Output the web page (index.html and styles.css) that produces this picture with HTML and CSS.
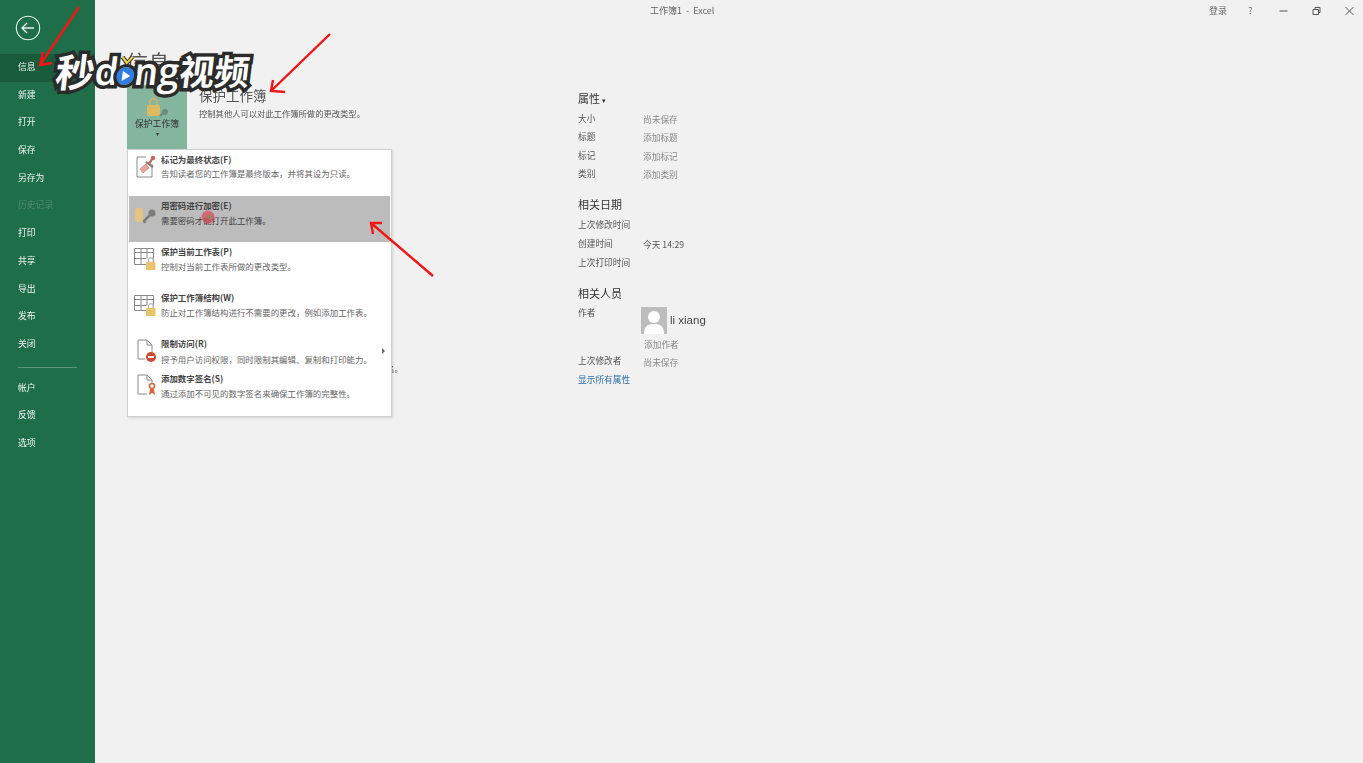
FILE: index.html
```html
<!DOCTYPE html>
<html lang="zh-CN">
<head>
  <meta charset="UTF-8" />
  <title>工作簿1 - Excel</title>
  <link rel="stylesheet" href="styles.css">
</head>
<body>
  <div class="app">
    <nav class="sidebar">
      <div class="back">
        <svg width="26" height="26" viewBox="0 0 26 26"><circle cx="13" cy="13" r="11.7" fill="none" stroke="#e8f2ec" stroke-width="1.1"/><path d="M7 13h12M12 8l-5 5 5 5" fill="none" stroke="#e8f2ec" stroke-width="1.4"/></svg>
      </div>
      <a class="nav-item active">信息</a>
      <a class="nav-item">新建</a>
      <a class="nav-item">打开</a>
      <a class="nav-item">保存</a>
      <a class="nav-item">另存为</a>
      <a class="nav-item disabled">历史记录</a>
      <a class="nav-item">打印</a>
      <a class="nav-item">共享</a>
      <a class="nav-item">导出</a>
      <a class="nav-item">发布</a>
      <a class="nav-item">关闭</a>
      <div class="nav-sep"></div>
      <a class="nav-item">帐户</a>
      <a class="nav-item">反馈</a>
      <a class="nav-item">选项</a>
    </nav>

    <div class="content">
      <header class="titlebar">
        <span class="doc-title">工作簿1 &nbsp;-&nbsp; Excel</span>
        <div class="win-controls">
          <span class="login">登录</span>
          <span class="win-btn">?</span>
          <svg class="win-btn" width="10" height="10" viewBox="0 0 10 10"><path d="M1 5h8" stroke="#555" fill="none"/></svg>
          <svg class="win-btn" width="10" height="10" viewBox="0 0 10 10"><path d="M1.500 3.500h5.500v5h-5.500zM3.500 3.500v-2h5v5h-1.500" stroke="#555" fill="none"/></svg>
          <svg class="win-btn" width="10" height="10" viewBox="0 0 10 10"><path d="M1 1l8 8M9 1l-8 8" stroke="#555" fill="none"/></svg>
        </div>
      </header>

      <h1 class="page-title">信息</h1>

      <div class="info-grid">
        <div class="left-col">
          <section class="protect">
            <div class="protect-btn">
              <svg width="30" height="26" viewBox="0 0 30 26"><path d="M8 13V9a3.500 3.500 0 0 1 7 0v4" fill="none" stroke="#c9b26e" stroke-width="1.800"/><rect x="5" y="12" width="13" height="11" rx="1.500" fill="#dcba62"/><path d="M18 23l3-3" stroke="#6f8a7c" stroke-width="2"/><circle cx="23" cy="19" r="3" fill="#6f8a7c"/></svg>
              <span>保护工作簿</span>
              <i class="caret">▾</i>
            </div>
            <div class="protect-text">
              <h2>保护工作簿</h2>
              <p>控制其他人可以对此工作簿所做的更改类型。</p>
            </div>
          </section>
          <p class="inspect-text">姓名。</p>
        </div>

        <aside class="props">
          <h3>属性 <small>▾</small></h3>
          <dl class="prop-list">
            <dt>大小</dt><dd>尚未保存</dd>
            <dt>标题</dt><dd>添加标题</dd>
            <dt>标记</dt><dd>添加标记</dd>
            <dt>类别</dt><dd>添加类别</dd>
          </dl>
          <h3 class="group">相关日期</h3>
          <dl class="prop-list dates">
            <dt>上次修改时间</dt><dd></dd>
            <dt>创建时间</dt><dd class="dark">今天 14:29</dd>
            <dt>上次打印时间</dt><dd></dd>
          </dl>
          <h3 class="group people">相关人员</h3>
          <div class="author-row">
            <span class="author-label">作者</span>
            <div class="author">
              <div class="author-main">
                <svg width="26" height="27" viewBox="0 0 26 27"><rect width="26" height="27" fill="#bdbdbd"/><circle cx="13" cy="10" r="6" fill="#fff"/><path d="M3 27c0-8 4-10 10-10s10 2 10 10z" fill="#fff"/></svg>
                <span class="author-name">li xiang</span>
              </div>
              <span class="add-author">添加作者</span>
            </div>
          </div>
          <div class="editor-row">
            <span>上次修改者</span>
            <span class="muted">尚未保存</span>
          </div>
          <a class="show-all">显示所有属性</a>
        </aside>
      </div>
    </div>
  </div>

  <!-- dropdown lies over the info page -->
  <div class="menu">
    <div class="menu-item tall top">
      <svg class="menu-icon" width="24" height="24" viewBox="0 0 24 24"><path d="M12 2H3v20h15V9" fill="#fff" stroke="#8a8a8a"/><path d="M6 14l6-5 3 4-6 5z" fill="#e8a79a" stroke="#c96a57" stroke-width=".6"/><path d="M12 7l7 5" stroke="#8a8078" stroke-width="2.200"/><path d="M15 9l3-5" stroke="#c9635a" stroke-width="2.400"/><circle cx="19" cy="3" r="2.200" fill="#c9635a"/></svg>
      <div><b>标记为最终状态(F)</b><p>告知读者您的工作簿是最终版本，并将其设为只读。</p></div>
    </div>
    <div class="menu-item tall hover">
      <svg class="menu-icon" width="24" height="24" viewBox="0 0 24 24"><rect x="1" y="7" width="8" height="14" rx="2" fill="#e6c584"/><circle cx="18" cy="12" r="3.500" fill="#7c7c78"/><path d="M16 14l-6 6 1 2" stroke="#7c7c78" stroke-width="2.500" fill="none"/></svg>
      <div><b>用密码进行加密(E)</b><p>需要密码才能打开此工作簿。</p></div>
    </div>
    <div class="menu-item tall">
      <svg class="menu-icon" width="24" height="24" viewBox="0 0 24 24"><path d="M.5 1.500h19v16H.5zM.5 5.500h19M.5 11.500h12M7 1.500v16M13 1.500v10" fill="#fff" stroke="#8a8a8a"/><rect x="12" y="15" width="9.500" height="8" rx="1" fill="#e9c46c"/><path d="M14.500 15v-2a2.300 2.300 0 0 1 4.600 0v2" fill="#fff" stroke="#b9b9b9" stroke-width="1.200"/></svg>
      <div><b>保护当前工作表(P)</b><p>控制对当前工作表所做的更改类型。</p></div>
    </div>
    <div class="menu-item tall">
      <svg class="menu-icon" width="24" height="24" viewBox="0 0 24 24"><path d="M.5 2.500h19v15H.5zM.5 6.500h19M.5 12.500h12M7 2.500v15M13 2.500v10" fill="#fff" stroke="#8a8a8a"/><rect x="12" y="15" width="9.500" height="8" rx="1" fill="#e9c46c"/><path d="M14.500 15v-2a2.300 2.300 0 0 1 4.600 0v2" fill="#fff" stroke="#b9b9b9" stroke-width="1.200"/></svg>
      <div><b>保护工作簿结构(W)</b><p>防止对工作簿结构进行不需要的更改，例如添加工作表。</p></div>
    </div>
    <div class="menu-item short wide-gap">
      <svg class="menu-icon" width="24" height="24" viewBox="0 0 24 24"><path d="M4 1h9l5 5v7M13 1v5h5M4 1v19h7" fill="none" stroke="#8a8a8a"/><circle cx="17" cy="18" r="5" fill="#d2492f"/><path d="M14 18h6" stroke="#fff" stroke-width="2"/></svg>
      <div><b>限制访问(R)</b><p>授予用户访问权限，同时限制其编辑、复制和打印能力。</p></div>
      <i class="arrow-right"></i>
    </div>
    <div class="menu-item short">
      <svg class="menu-icon" width="24" height="24" viewBox="0 0 24 24"><path d="M4 1h9l5 5v3M13 1v5h5M4 1v19h9" fill="none" stroke="#8a8a8a"/><circle cx="18" cy="12" r="2.500" fill="none" stroke="#d9663f" stroke-width="1.600"/><path d="M16 15l-1 6 3-2 3 2-1-6" fill="#d9663f"/></svg>
      <div><b>添加数字签名(S)</b><p>通过添加不可见的数字签名来确保工作簿的完整性。</p></div>
    </div>
  </div>

  <!-- video overlay: red annotation arrows and watermark -->
  <svg class="arrows" width="1363" height="763" viewBox="0 0 1363 763">
    <g fill="none" stroke="#f41414" stroke-width="2.400">
      <path d="M79 7L40 65M43 52l-3 13 12-2"/>
      <path d="M330 34L271 91M273 80l-2 11 14 1"/>
      <path d="M433 276L371 223M373 234l-2-11 11 0"/>
    </g>
    <circle cx="208" cy="217" r="6.500" fill="#e0455a" opacity=".7"/>
    <circle cx="209" cy="217" r="2" fill="#6f9a55"/>
  </svg>
  <div class="logo">
    <span class="logo-cn first">秒</span><span class="logo-en">d</span><i class="play"><svg class="crown" width="14" height="10" viewBox="0 0 14 10"><path d="M2 1l5 6 5-6" fill="none" stroke="#2b2b2b" stroke-width="4"/><path d="M2 1l5 6 5-6" fill="none" stroke="#f3d53c" stroke-width="2"/></svg><svg width="10" height="10" viewBox="0 0 10 10"><path d="M2 0l8 5-8 5z" fill="#fff"/></svg></i><span class="logo-en">ng</span><span class="logo-cn">视频</span>
  </div>
</body>
</html>
```

FILE: styles.css
```css
* {
  box-sizing: border-box;
}
body {
  margin: 0;
  width: 1363px;
  height: 763px;
  overflow: hidden;
  background-color: #f1f1f1;
  font-family: "Noto Sans CJK SC", "Liberation Sans", sans-serif;
  color: #444;
  position: relative;
}
.app {
  display: flex;
  height: 763px;
  filter: blur(0.45px);
}

/* left green column */
.sidebar {
  width: 95px;
  flex: none;
  background-color: #1f6e4a;
  display: flex;
  flex-direction: column;
}
.back {
  height: 54px;
  padding: 15px 0 0 15px;
}
.nav-item {
  display: block;
  height: 27.7px;
  line-height: 26px;
  padding-left: 18px;
  font-size: 8.8px;
  color: #eef5f0;
}
.nav-item.active {
  background-color: #185c3c;
}
.nav-item.disabled {
  color: #4f8d70;
}
.nav-sep {
  height: 1px;
  margin: 8px 18px 7px;
  background-color: #5d957c;
}

/* main area */
.content {
  flex: 1;
  min-width: 0;
}
.titlebar {
  display: flex;
  align-items: center;
  height: 21px;
  font-size: 9px;
  color: #666;
}
.doc-title {
  margin-left: 555px;
}
.win-controls {
  margin-left: auto;
  margin-right: -3px;
  display: flex;
  align-items: center;
}
.login {
  margin-right: 7px;
}
.win-btn {
  width: 33px;
  text-align: center;
  padding: 0 11.5px;
  flex: none;
}
.page-title {
  margin: 27px 0 0 31px;
  height: 36px;
  font-size: 22px;
  line-height: 26px;
  font-weight: 400;
  color: #555;
}
.info-grid {
  display: grid;
  grid-template-columns: 451px 200px;
  padding-left: 32px;
}
.protect {
  display: flex;
  align-items: flex-start;
}
.protect-btn {
  width: 60px;
  height: 64px;
  margin-top: 1px;
  background-color: #84b59e;
  display: flex;
  flex-direction: column;
  align-items: center;
  padding-top: 8px;
  font-size: 8.8px;
  color: #333;
}
.protect-btn span {
  margin-top: -2px;
  line-height: 13px;
}
.caret {
  font-style: normal;
  font-size: 6px;
  line-height: 8px;
}
.protect-text {
  margin-left: 12px;
  padding-top: 1px;
}
.protect-text h2 {
  margin: 0;
  font-size: 13.5px;
  line-height: 20px;
  font-weight: 400;
  color: #555;
}
.protect-text p {
  margin: 1px 0 0;
  font-size: 8.3px;
  line-height: 14px;
  color: #555;
}
.inspect-text {
  margin: 212px 0 0 251px;
  font-size: 8.3px;
  line-height: 14px;
  color: #555;
}

/* properties column */
.props {
  padding-top: 6px;
  font-size: 8.7px;
  color: #555;
}
.props h3 {
  margin: 0;
  font-size: 11px;
  line-height: 16px;
  font-weight: 400;
  color: #333;
}
.props h3 small {
  font-size: 7px;
}
.props .group {
  margin-top: 12px;
}
.props .people {
  margin-top: 13px;
}
.prop-list {
  display: grid;
  grid-template-columns: 65px 1fr;
  grid-auto-rows: 18.4px;
  margin: 2px 0 0;
  line-height: 18.4px;
}
.prop-list dt {
  color: #555;
}
.prop-list dd {
  margin: 0;
  color: #888;
  padding-top: 1px;
}
.prop-list dd.dark {
  color: #555;
}
.dates {
  grid-auto-rows: 19px;
  margin-top: 3px;
  line-height: 19px;
}
.author-row {
  display: flex;
  margin-top: 4px;
}
.author-label {
  width: 63px;
  line-height: 14px;
  margin-top: 1px;
}
.author-main {
  display: flex;
  align-items: center;
  gap: 3px;
  margin-top: 2px;
}
.author-name {
  font-family: "Liberation Sans", sans-serif;
  font-size: 11.5px;
  color: #444;
}
.add-author {
  display: block;
  margin: 4px 0 0 3px;
  line-height: 14px;
  color: #888;
}
.editor-row {
  display: flex;
  line-height: 14px;
  margin-top: 2px;
}
.editor-row .muted {
  margin: 2px 0 0 22px;
  color: #888;
}
.show-all {
  display: block;
  margin-top: 3px;
  line-height: 14px;
  color: #2a6fa8;
}

/* protect dropdown */
.menu {
  position: absolute;
  left: 127px;
  top: 149px;
  width: 265px;
  height: 268px;
  padding: 0 1px 1px;
  background-color: #fff;
  border: 1px solid #d0d0d0;
  box-shadow: 1px 1px 2px rgba(0,0,0,0.12);
}
.menu-item {
  display: flex;
  align-items: flex-start;
  padding: 2px 0 0 5px;
  position: relative;
  font-size: 8.45px;
  line-height: 14px;
  color: #666;
}
.menu-item.tall {
  height: 46px;
}
.menu-item.short {
  height: 35px;
}
.menu-item.hover {
  background-color: #bcbcbc;
  color: #444;
}
.menu-item b {
  display: block;
  color: #444;
}
.menu-item p {
  margin: 1px 0 0;
}
.menu-item.top p {
  margin-top: 0;
}
.menu-item.wide-gap p {
  margin-top: 2px;
}
.menu-icon {
  margin: 3px 3px 0 0;
  flex: none;
}
.arrow-right {
  position: absolute;
  right: 5px;
  top: 14px;
  border-left: 3px solid #666;
  border-top: 3px solid transparent;
  border-bottom: 3px solid transparent;
}

/* video overlays */
.arrows {
  position: absolute;
  left: 0;
  top: 0;
  pointer-events: none;
}
.logo {
  position: absolute;
  left: 56px;
  top: 48px;
  display: flex;
  align-items: center;
  height: 44px;
  color: #fff;
  font-weight: 700;
  line-height: 44px;
  transform: skewX(-7deg);
  -webkit-text-stroke: 7px #2b2b2b;
  paint-order: stroke fill;
}
.logo-cn {
  font-family: "Noto Sans CJK SC", sans-serif;
  font-size: 35px;
}
.logo-cn.first {
  font-size: 39px;
}
.logo-en {
  font-family: "Open Sans", sans-serif;
  font-size: 38px;
  font-weight: 600;
}
.play {
  position: relative;
  width: 18px;
  height: 18px;
  margin: 12px 0 0 -2px;
  border-radius: 50%;
  background-color: #2f7ee6;
  display: flex;
  align-items: center;
  justify-content: center;
  outline: 3px solid #2b2b2b;
  flex: none;
}
.crown {
  position: absolute;
  left: 2px;
  top: -11px;
}
```
